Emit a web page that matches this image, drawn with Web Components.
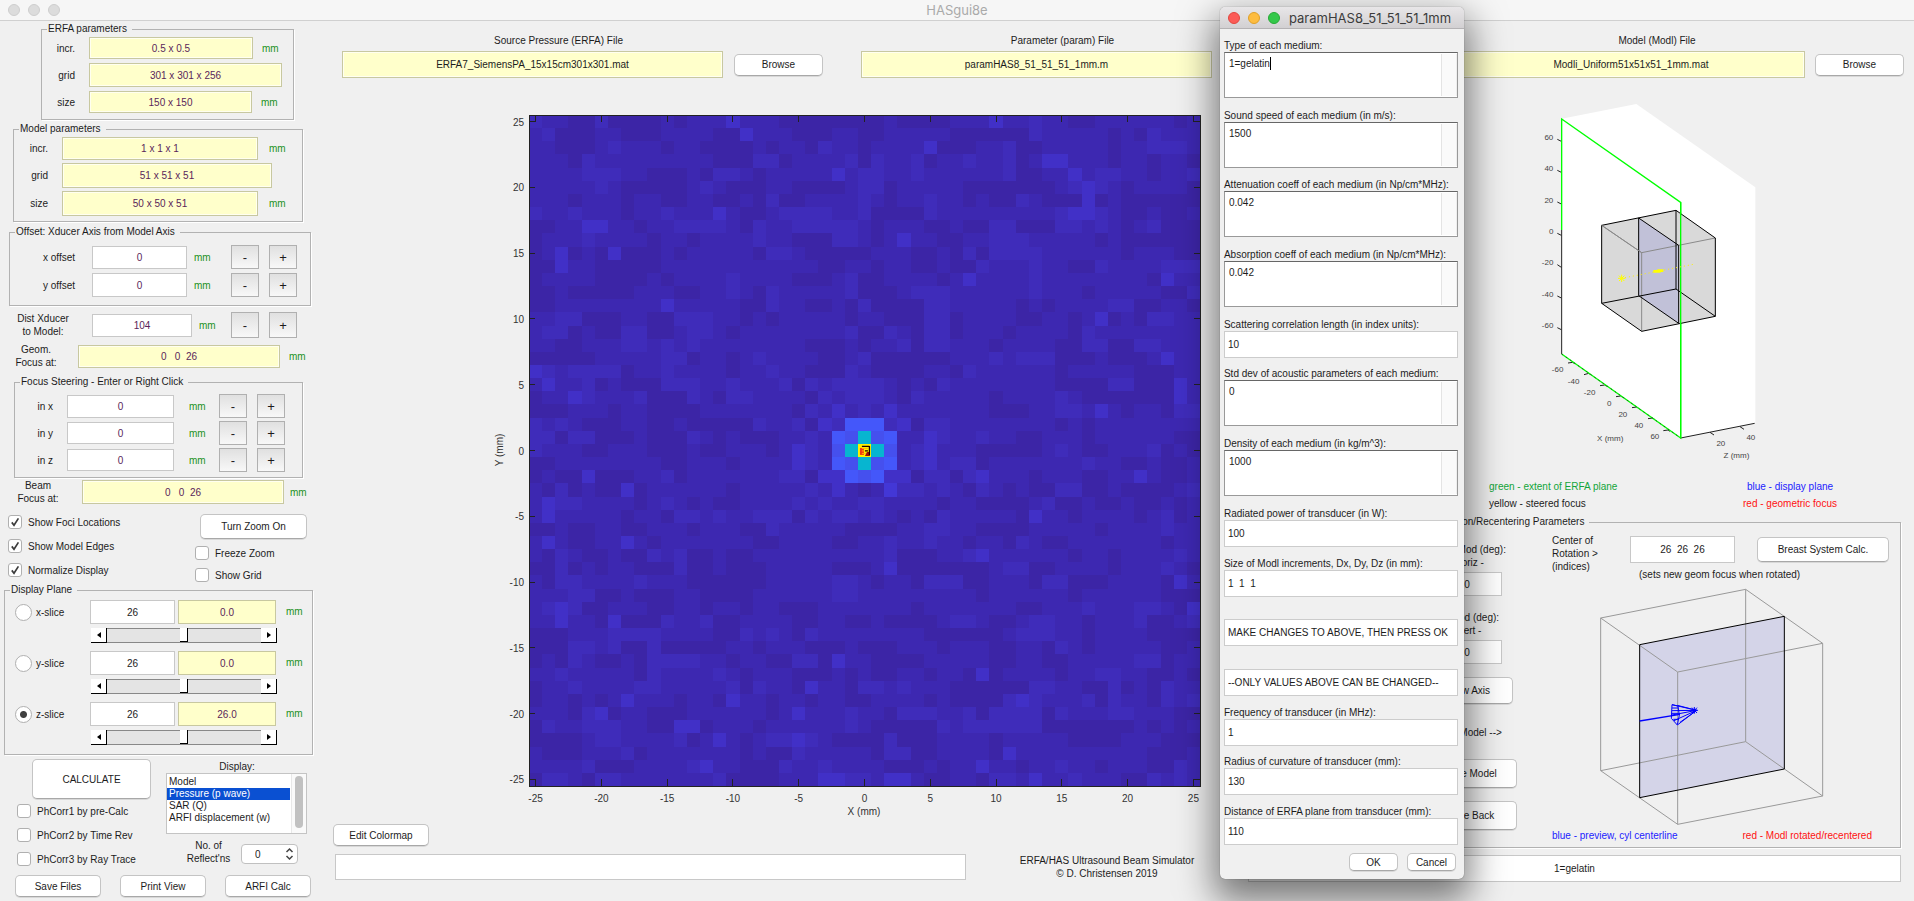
<!DOCTYPE html>
<html lang="en">
<head>
<meta charset="utf-8">
<title>HASgui8e</title>
<style>
html,body{margin:0;min-height:100%;background:#f0f0f0}
body{font:10px/13px "Liberation Sans",Arial,sans-serif;color:#1c1c1c}
</style>
</head>
<body>
<has-app></has-app>
<script>
const BASE = `<style>
*{box-sizing:border-box}
input,button,select,textarea{font:inherit;color:inherit;margin:0;outline:none;border-radius:0}
label{display:block}
</style>`;

function define(name, render, after) {
  customElements.define(name, class extends HTMLElement {
    connectedCallback() {
      if (this.shadowRoot) return;
      const root = this.attachShadow({ mode: 'open' });
      root.innerHTML = BASE + render(k => this.getAttribute(k) || '', this);
      if (after) after(root, this);
    }
  });
}

/* Rounded push button */
define('mac-button', () => `<style>
:host{display:block;height:22px}
button{width:100%;height:100%;padding:0;background:#fff;border:1px solid #c4c4c4;border-bottom-color:#a8a8a8;border-radius:5px;white-space:nowrap;box-shadow:0 1px 0 #d8d8d8}
</style><button type="button"><slot></slot></button>`);

/* Etched frame with a caption */
define('etched-group', a => `<style>
:host{display:block}
fieldset{margin:0;padding:0;min-width:0;height:100%;border:1px solid #b2b2b2;box-shadow:1px 1px 0 #fff}
legend{margin-left:5px;padding:0 5px 0 1px;height:12px;line-height:12px;background:#f0f0f0}
</style><fieldset><legend>${a('caption')}</legend><slot></slot></fieldset>`);

/* Label, value box, unit and optional - / + buttons */
define('value-row', a => `<style>
:host{display:flex;align-items:center;--w:95px;--h:23px}
label{width:var(--lead);padding-right:var(--label-gap,14px);text-align:right;flex:none;white-space:nowrap}
label.two{text-align:center;padding:0 6px 0 0}
input{width:var(--w);height:var(--h);text-align:center;border:1px solid #c8c8c8;background:#fff;color:#5a1f5a;flex:none;padding:0}
input.y{background:#ffffcb;border-color:#c8c8a0;box-shadow:inset 0 0 0 1px #fffff0}
span{color:#229022;margin-left:var(--unit-gap,9px);width:18px;flex:none}
button{width:28px;height:var(--bh,24px);padding:0;font-size:13px;background:linear-gradient(#e0e0e0,#f8f8f8);border:1px solid #b0b0b0;margin-left:10px;flex:none}
span+button{margin-left:var(--step-gap,19px)}
</style><label for="v" class="${a('label').includes('<') ? 'two' : ''}">${a('label')}</label>
<input id="v" class="${a('tone')}" style="--w:${a('w')}px;--h:${a('h')}px" value="${a('value')}">
${a('unit') ? `<span>${a('unit')}</span>` : ''}
${a('steps') ? '<button type="button">-</button><button type="button">+</button>' : ''}`);

define('check-item', (a, el) => `<style>
:host{display:flex;align-items:center;height:var(--row,24px)}
label{display:flex;align-items:center;gap:6px;white-space:nowrap}
span{position:relative;width:14px;height:14px;flex:none}
input{appearance:none;width:14px;height:14px;border:1px solid #b0b0b0;border-radius:3px;background:#fff;display:block}
svg{position:absolute;inset:0;display:none;pointer-events:none}
input:checked+svg{display:block}
</style><label><span><input type="checkbox" ${el.hasAttribute('checked') ? 'checked' : ''}><svg width="14" height="14" viewBox="0 0 14 14"><path d="M3.8 7.4 6 10.2 10.4 3.4" fill="none" stroke="#3c3c3c" stroke-width="1.7"/></svg></span><slot></slot></label>`);

/* One display-plane slice: radio, index, position and scroller */
define('slice-row', (a, el) => `<style>
:host{display:grid;grid-template-columns:85px 85px 99px 1fr;column-gap:0;row-gap:3px;height:43px}
label{display:flex;align-items:center;gap:4px;padding-left:10px;height:24px}
input[type=radio]{appearance:none;width:17px;height:17px;border:1px solid #b0b0b0;border-radius:50%;background:#fff;flex:none}
input[type=radio]:checked{background:radial-gradient(circle,#404040 0 3px,#fff 4px)}
input[type=text]{width:100%;height:24px;text-align:center;border:1px solid #c8c8c8;background:#fff;padding:0}
input.y{background:#ffffcb;border-color:#c8c8a0;color:#5a1f5a;width:98px;margin-left:3px}
.unit{color:#229022;padding-left:12px;line-height:24px}
.bar{grid-column:2/4;display:flex;height:15px;width:186px;margin-left:1px}
.bar button{width:16px;padding:0;background:#fff;border:0;border-right:1px solid #000;border-bottom:1px solid #000;display:grid;place-items:center}
input[type=range]{appearance:none;flex:1;min-width:0;height:15px;background:#e4e4e4;border-top:1px solid #888;border-bottom:1px solid #888}
input[type=range]::-webkit-slider-thumb{appearance:none;width:8px;height:14px;background:#fff;border-right:1px solid #000;border-bottom:1px solid #000}
</style><label><input type="radio" ${el.hasAttribute('checked') ? 'checked' : ''}>${a('name')}</label>
<input type="text" aria-label="${a('name')} index" value="26"><input type="text" class="y" aria-label="${a('name')} position" value="${a('pos')}"><span class="unit">mm</span>
<div class="bar"><button type="button" aria-label="Previous"><svg width="4" height="6"><path d="M4 0V6L0 3z"/></svg></button><input type="range" aria-label="${a('name')} scroller" value="50"><button type="button" aria-label="Next"><svg width="4" height="6"><path d="M0 0V6L4 3z"/></svg></button></div>`);

define('file-picker', a => `<style>
:host{display:block}
label{text-align:center;padding-left:52px;line-height:13px;margin-bottom:4px}
.row{display:grid;grid-template-columns:1fr;gap:var(--gap,11px);align-items:center}
.row.b{grid-template-columns:1fr 89px}
.lab{display:grid;grid-template-columns:1fr;gap:var(--gap,11px)}
.lab.b{grid-template-columns:1fr 89px}
input{width:100%;height:27px;min-width:0;text-align:center;background:#ffffcb;border:1px solid #c8c8a0;box-shadow:inset 0 0 0 1px #fffff0;padding:0}
</style><div class="lab ${a('browse')}"><label for="f">${a('caption')}</label></div>
<div class="row ${a('browse')}"><input id="f" value="${a('file')}">${a('browse') ? '<mac-button>Browse</mac-button>' : ''}</div>`);

/* Pressure map: 51 x 51 cells; HOT lists the brighter ones as "column row" */
const HOT = `15 0;35 0;16 1;30 2;39 3;40 3;23 4;41 4;42 5;42 6;14 7;41 7;42 7;4 8;5 8;28 9;2 10;6 10;2 11;33 12;48 12;10 14;43 15;48 18;0 19;1 20;49 20;3 21;49 21;43 22;4 27;34 27;46 27;7 28;1 29;1 30;38 30;1 32;7 32;34 33;27 34;49 35;2 37;50 37;2 38;6 38;34 42;23 41;21 43;7 44;15 44;37 44;5 45;20 45;11 46;12 46;14 47;20 47;36 48;13 49;34 49;22 50;23 50;27 50;28 50;38 50`;
const CORE = ['2021222210102','1102122210211','1021312131111','1203266623022','1121657561132','1321578751231','1321657561231','2203365633022','1121310142212','1212112211110','2021221210102'];
const SHADES = ['#3c25a6','#3d28b1','#3f2cba','#4130c7','#4337d6','#4550ee','#4457fa','#07b5d0','#fff200'];
function heatCells() {
  let s = 20190;
  const rnd = () => (s = (s * 1103515245 + 12345) % 2147483648) / 2147483648;
  const g = [];
  for (let y = 0; y < 51; y++) {
    g.push([]);
    for (let x = 0; x < 51; x++) {
      const v = rnd(), k = rnd();
      if (k < .25 && x) g[y].push(g[y][x - 1]);
      else if (k < .42 && y) g[y].push(g[y - 1][x]);
      else g[y].push(v < .3 ? 0 : v < .84 ? 1 : 2);
    }
  }
  HOT.split(';').forEach(p => { const [x, y] = p.split(' ').map(Number); g[y][x] = 3; });
  CORE.forEach((r, j) => [...r].forEach((c, i) => g[20 + j][19 + i] = +c));
  g[25][25] = 8;
  const d = SHADES.map(() => '');
  g.forEach((row, y) => { for (let x = 0; x < 51;) { let n = x; while (n < 51 && row[n] === row[x]) n++; d[row[x]] += `M${x} ${y}h${n - x}v1h${x - n}z`; x = n; } });
  return d.map((p, i) => `<path fill="${SHADES[i]}" d="${p}"/>`).join('');
}
define('pressure-plot', () => {
  const c = 671 / 51, X0 = 40, Y0 = 10;
  let ticks = '', text = '';
  for (let i = 0; i <= 10; i++) {
    const p = c * (i * 5 + .5);
    ticks += `M${X0 + p} ${Y0}v7M${X0 + p} ${Y0 + 671}v-7M${X0} ${Y0 + p}h6M${X0 + 671} ${Y0 + p}h-6`;
    text += `<text x="${X0 + p}" y="${Y0 + 687}" text-anchor="middle">${i * 5 - 25}</text><text x="${X0 - 5}" y="${Y0 + p + 4}" text-anchor="end">${25 - i * 5}</text>`;
  }
  return `<style>:host{display:block}svg{display:block;width:100%}text{font-size:10px;fill:#333}</style>
<svg viewBox="0 0 716 715"><g transform="translate(${X0} ${Y0}) scale(${c})" shape-rendering="crispEdges">${heatCells()}</g>
<g transform="translate(${X0 + c * 25} ${Y0 + c * 25})"><path d="M2 4h4v7h-4z" fill="#f33a10"/><path d="M9 8h3v4h-5z" fill="#a01008"/><path d="M4 2.5H11.5M11.5 2v9M7 7h3" fill="none" stroke="#1a0500" stroke-width="1.3"/><path d="M4 4.5h6M4 7h2M4 9.5h4" stroke="#ffb800" stroke-width="1"/></g>
<path d="M${X0} ${Y0}h671v671h-671z${ticks}" fill="none" stroke="#222" stroke-width="1" shape-rendering="crispEdges"/>${text}
<text x="${X0 + 335}" y="710" text-anchor="middle">X (mm)</text><text transform="translate(14 345) rotate(-90)" text-anchor="middle">Y (mm)</text></svg>`;
});

/* 3-D overview of the ERFA plane and the model block */
define('model-view', () => {
  const t = [[160,420,60],[160,513,40],[160,609,20],[160,702,0],[160,795,-20],[160,891,-40],[160,984,-60],
    [190,1116,-60],[238,1152,-40],[286,1185,-20],[334,1218,0],[382,1251,20],[430,1284,40],[478,1317,60],[676,1338,20],[766,1320,40]];
  return `<style>:host{display:block}svg{display:block;width:100%}text{font-size:24px;fill:#444;text-anchor:end}</style>
<svg viewBox="90 300 720 1110"><path d="M185 356 409 312 766 562V1270L542 1314 185 1062z" fill="#fff"/>
<path d="M185 690V1062M542 1314 764 1270M172 418l12 6M172 511l12 6M172 606l12 6M172 700l12 6M172 794l12 8M172 888l12 6M172 983l12 6M204 1089l14-2 6 4M252 1124l14-4 6 4M300 1157l14-2 6 4M348 1190l14-2 6 4M396 1223l14-2 6 4M444 1256l14-2 6 4M490 1292l14-2 6 4M630 1297l12 8M720 1280l12 8" fill="none" stroke="#222" stroke-width="3"/>
<path d="M185 690V357L542 607V1314L185 1062" fill="none" stroke="#0f0" stroke-width="4"/>
<path d="M185 1062 542 1314" stroke="#222" stroke-width="2" stroke-dasharray="5 10"/>
<path d="M305 676 528 631 646 714V949L425 994 305 910z" fill="#d9d9d9"/>
<path d="M416 654 536 736V970L416 887z" fill="#c1c1d8"/>
<path d="M305 676 425 758 646 714M425 758V994" fill="none" stroke="#8a8a8a" stroke-width="3"/>
<path d="M305 676 528 631 646 714V949L425 994 305 910zM305 910 528 867 646 949M528 631V867M416 654 536 736V970L416 887z" fill="none" stroke="#000" stroke-width="3"/>
<path d="M305 676 425 758" stroke="#8a8a8a" stroke-width="3"/>
<path d="M542 607V1314" stroke="#0f0" stroke-width="4"/>
<path d="M375 833 580 793" stroke="#fff200" stroke-width="3" stroke-dasharray="3 9"/>
<path d="M354 835h22M365 824v22M357 827l16 16M373 827l-16 16" stroke="#ff0" stroke-width="3"/><path d="M460 814h22M472 812h18" stroke="#ff0" stroke-width="8"/>
${t.map(([x, y, s]) => `<text x="${x}" y="${y}">${s}</text>`).join('')}
<text x="370" y="1323">X (mm)</text><text x="748" y="1374">Z (mm)</text></svg>`;
});

/* Wireframe preview used by the rotation panel */
define('rotation-view', () => `<style>:host{display:block}svg{display:block;width:100%}</style>
<svg viewBox="405 348 699 729"><path d="M539 524 973 439V897L539 983z" fill="#d4d4e8"/>
<path d="M422 444 857 358 1088 520 653 606zM422 902 857 815 1088 978 653 1063zM422 444V902M857 358V815M1088 520V978M653 606V1063" fill="none" stroke="#999" stroke-width="3"/>
<path d="M539 524 973 439V897L539 983z" fill="none" stroke="#000" stroke-width="3"/>
<path d="M539 753 660 733" stroke="#00f" stroke-width="4"/>
<path d="M710 721 636 704 634 745 652 765zM710 721 652 706M710 721 636 722M710 721 636 735M710 721 642 752M710 721 660 757M636 704l18 4 4 28-6 28M636 714h18M636 730h20M640 748h16M692 721h22M703 711v20M696 713l15 16M711 713l-15 16" fill="none" stroke="#00f" stroke-width="3"/></svg>`);

define('dialog-field', a => `<style>
:host{display:block}
label{height:12px;line-height:12px;white-space:nowrap}
textarea,input{display:block;width:100%;background:#fff}
textarea{height:46px;resize:none;overflow:hidden;border:1px solid #999;border-top-color:#666;padding:4px 20px 0 4px;margin-bottom:1px}
input{height:27px;border:1px solid #ccc;padding:0 3px}
.area{position:relative}
.area i{position:absolute;right:1px;top:2px;bottom:2px;width:16px;background:#fafafa;border-left:1px solid #e4e4e4;border-right:1px solid #eee}
.area b{position:absolute;left:46px;top:5px;width:1px;height:13px;background:#000}
</style>${a('label') ? `<label for="v">${a('label')}</label>` : ''}${a('kind') === 'area'
  ? `<div class="area"><textarea id="v">${a('value')}</textarea><i></i>${a('caret') ? '<b></b>' : ''}</div>`
  : `<input id="v" value="${a('value')}" ${a('label') ? '' : 'aria-label="Note"'}>`}`);

const FIELDS = [
  ['Type of each medium:', '1=gelatin', 1], ['Sound speed of each medium (in m/s):', '1500', 1],
  ['Attenuation coeff of each medium (in Np/cm*MHz):', '0.042', 1], ['Absorption coeff of each medium (in Np/cm*MHz):', '0.042', 1],
  ['Scattering correlation length (in index units):', '10'], ['Std dev of acoustic parameters of each medium:', '0', 1],
  ['Density of each medium (in kg/m^3):', '1000', 1], ['Radiated power of transducer (in W):', '100'],
  ['Size of Modl increments, Dx, Dy, Dz (in mm):', '1  1  1'], ['', 'MAKE CHANGES TO ABOVE, THEN PRESS OK'],
  ['', '--ONLY VALUES ABOVE CAN BE CHANGED--'], ['Frequency of transducer (in MHz):', '1'],
  ['Radius of curvature of transducer (mm):', '130'], ['Distance of ERFA plane from transducer (mm):', '110']];
define('param-dialog', () => `<style>
:host{display:flex;flex-direction:column;background:#f0f0f0;border-radius:5px;box-shadow:0 0 1px rgba(0,0,0,.6),0 16px 36px 6px rgba(0,0,0,.5)}
header{display:flex;align-items:center;gap:8px;height:22px;padding-left:8px;background:linear-gradient(#e8e6e8,#d2d0d2);border-bottom:1px solid #b4b2b4;border-radius:5px 5px 0 0;font:13px/20px Inter,sans-serif;color:#3c3c3c;white-space:nowrap}
i{width:12px;height:12px;border-radius:50%;background:#fc5b57;border:1px solid #e2463f}
i+i{background:#fdbc40;border-color:#e0a028}i+i+i{background:#34c84a;border-color:#27aa35;margin-right:1px}
.fields{flex:1;display:flex;flex-direction:column;justify-content:space-between;padding:11px 6px 0 4px}
.fields .note{padding-top:12px}
footer{display:flex;justify-content:flex-end;gap:9px;padding:8px 8px 8px 0}
mac-button{width:49px;height:18px}
</style><header><i></i><i></i><i></i>paramHAS8_51_51_51_1mm</header>
<div class="fields">${FIELDS.map(([l, v, k], n) => `<dialog-field class="${l ? '' : 'note'}" label="${l}" value="${v}" kind="${k ? 'area' : ''}" caret="${n ? '' : 'y'}"></dialog-field>`).join('')}</div>
<footer><mac-button>OK</mac-button><mac-button>Cancel</mac-button></footer>`);

/* Left column of controls */
define('control-panel', () => `<style>
:host{display:block}
.rows{display:grid;gap:var(--g)}
.pair{display:grid;grid-template-columns:187px 107px;padding-left:8px;margin-top:5px;height:74px}
.right{padding-top:4px}
.right check-item{--row:22px}
.right mac-button{width:107px;height:25px;margin:0 0 3px 5px}
.lower{display:grid;grid-template-columns:149px 142px;padding-left:17px}
.calc{width:119px;height:40px;margin:4px 0 0 15px}
.list{position:relative;width:141px;height:61px}
.list select{appearance:none;width:100%;height:100%;border:1px solid #c4c4c4;background:#fff;padding:2px 0 0;overflow:hidden}
.list option{height:12px;min-height:12px;line-height:12px;padding:0 2px;margin-right:16px;color:#1c1c1c}
.list option:checked{background:#0a50d2 linear-gradient(#0a50d2,#0a50d2);color:#fff}
.list i{position:absolute;right:1px;top:1px;bottom:1px;width:15px;background:#fafafa;border-left:1px solid #e8e8e8}
.list i::after{content:"";position:absolute;left:3px;top:2px;width:8px;height:52px;border-radius:4px;background:#c1c1c1}
.disp{text-align:center;line-height:12px;margin-top:6px}
.refl{display:flex;align-items:center;gap:10px;margin:5px 0 0 20px}
.refl label{text-align:center;width:45px}
.pop{position:relative;margin-top:4px}
.pop select{appearance:none;width:57px;height:20px;border:1px solid #c0c0c0;border-radius:4px;background:#fff;padding:0 0 0 13px}
.pop svg{position:absolute;right:4px;top:3px;pointer-events:none}
.btns{display:grid;grid-template-columns:repeat(3,86px);gap:19px;margin:4px 0 0 15px}
</style>
<etched-group caption="ERFA parameters" style="width:253px;margin:2px 0 0 41px"><div class="rows" style="--g:4px;--lead:47px;padding:2px 0 6px">
<value-row label="incr." value="0.5 x 0.5" unit="mm" tone="y" w="164" h="22"></value-row>
<value-row label="grid" value="301 x 301 x 256" tone="y" w="193" h="24"></value-row>
<value-row label="size" value="150 x 150" unit="mm" tone="y" w="163" h="22"></value-row></div></etched-group>
<etched-group caption="Model parameters" style="width:290px;margin:3px 0 0 13px"><div class="rows" style="--g:3px;--lead:48px;--unit-gap:11px;padding:2px 0 5px">
<value-row label="incr." value="1 x 1 x 1" unit="mm" tone="y" w="196" h="23"></value-row>
<value-row label="grid" value="51 x 51 x 51" tone="y" w="210" h="25"></value-row>
<value-row label="size" value="50 x 50 x 51" unit="mm" tone="y" w="196" h="25"></value-row></div></etched-group>
<etched-group caption="Offset: Xducer Axis from Model Axis" style="width:302px;margin:4px 0 0 9px"><div class="rows" style="--g:4px;--lead:82px;--label-gap:17px;--unit-gap:7px;padding:7px 0 8px">
<value-row label="x offset" value="0" unit="mm" steps="y" w="95" h="23"></value-row>
<value-row label="y offset" value="0" unit="mm" steps="y" w="95" h="24"></value-row></div></etched-group>
<value-row label="Dist Xducer<br>to Model:" value="104" unit="mm" steps="y" w="100" h="23" style="--lead:92px;--unit-gap:7px;--step-gap:14px;--bh:26px;margin-top:6px"></value-row>
<value-row label="Geom.<br>Focus at:" value="0   0  26" unit="mm" tone="y" w="202" h="23" style="--lead:78px;margin-top:5px"></value-row>
<etched-group caption="Focus Steering - Enter or Right Click" style="width:289px;margin:7px 0 0 14px"><div class="rows" style="--g:3px;--lead:52px;--unit-gap:15px;--step-gap:12px;padding:6px 0 5px">
<value-row label="in x" value="0" unit="mm" steps="y" w="107" h="23"></value-row>
<value-row label="in y" value="0" unit="mm" steps="y" w="107" h="22"></value-row>
<value-row label="in z" value="0" unit="mm" steps="y" w="107" h="22"></value-row></div></etched-group>
<value-row label="Beam<br>Focus at:" value="0   0  26" unit="mm" tone="y" w="202" h="24" style="--lead:82px;--unit-gap:6px;margin-top:1px"></value-row>
<div class="pair"><div><check-item checked>Show Foci Locations</check-item><check-item checked>Show Model Edges</check-item><check-item checked>Normalize Display</check-item></div>
<div class="right"><mac-button>Turn Zoom On</mac-button><check-item>Freeze Zoom</check-item><check-item>Show Grid</check-item></div></div>
<etched-group caption="Display Plane" style="width:309px;margin:0 0 0 4px"><div class="rows" style="--g:8px;padding:4px 0 9px">
<slice-row name="x-slice" pos="0.0"></slice-row><slice-row name="y-slice" pos="0.0"></slice-row><slice-row name="z-slice" pos="26.0" checked></slice-row></div></etched-group>
<div class="lower"><div><mac-button class="calc">CALCULATE</mac-button><check-item>PhCorr1 by pre-Calc</check-item><check-item>PhCorr2 by Time Rev</check-item><check-item>PhCorr3 by Ray Trace</check-item></div>
<div><label class="disp" for="list">Display:</label><div class="list"><select id="list" size="4"><option>Model</option><option selected>Pressure (p wave)</option><option>SAR (Q)</option><option>ARFI displacement (w)</option></select><i></i></div>
<div class="refl"><label for="n">No. of Reflect'ns</label><div class="pop"><select id="n"><option>0</option></select><svg width="9" height="14" viewBox="0 0 9 14"><path d="M1.5 5 4.5 2 7.5 5M1.5 9 4.5 12 7.5 9" fill="none" stroke="#444" stroke-width="1.5"/></svg></div></div></div></div>
<div class="btns"><mac-button>Save Files</mac-button><mac-button>Print View</mac-button><mac-button>ARFI Calc</mac-button></div>`);

define('center-panel', () => `<style>
:host{display:block}
.files{display:grid;grid-template-columns:481fr 351fr;gap:38px;padding:13px 36px 0 22px}
pressure-plot{margin:27px 43px 0 169px}
.edit{width:96px;margin:4px 0 0 13px}
.foot{display:grid;grid-template-columns:631fr 282fr;padding:8px 0 0 15px}
input{height:26px;border:1px solid #c8c8c8;background:#fff;width:100%}
p{margin:0;text-align:center}
</style><div class="files"><file-picker caption="Source Pressure (ERFA) File" file="ERFA7_SiemensPA_15x15cm301x301.mat" browse="b"></file-picker><file-picker caption="Parameter (param) File" file="paramHAS8_51_51_51_1mm.m"></file-picker></div>
<pressure-plot></pressure-plot><mac-button class="edit">Edit Colormap</mac-button>
<div class="foot"><input aria-label="Status"><p>ERFA/HAS Ultrasound Beam Simulator<br>© D. Christensen 2019</p></div>`);

define('model-panel', () => `<style>
:host{display:block;padding-right:10px}
file-picker{--gap:10px;padding:13px 0 0 209px}
model-view{width:240px;margin:22px 0 0 282px}
.key{display:grid;grid-template-columns:224px 170px;margin:8px 0 0 241px;line-height:17px}
.key span:nth-child(even){text-align:center;padding-right:36px;padding-left:20px;white-space:nowrap}
.g{color:#12a53a}.b{color:#22f}.r{color:#f11}
etched-group{margin:4px 3px 0 151px;height:332px}
.body{display:grid;grid-template-columns:120px 1fr;gap:32px;padding-top:6px}
.a{display:flex;flex-direction:column;align-items:center;padding-left:14px}
.a p{margin:15px 0 3px;text-align:center;white-space:nowrap}
.a p:first-child{margin-top:9px}
input{border:1px solid #c8c8c8;background:#fff;text-align:center;padding:0;height:24px;width:70px}
.a mac-button{width:99px;height:29px;margin-bottom:13px}
.a .axis{width:91px;height:27px;margin:13px 0 22px}
.a .move{margin:0 0 20px}
.top{display:grid;grid-template-columns:78px 105px 132px;align-items:start}
.top input{width:105px;height:27px;margin-top:2px}
.top mac-button{width:132px;height:25px;margin:3px 0 0 22px}
.note{margin:-5px 0 5px;padding-left:87px}
rotation-view{width:233px;margin-left:43px}
.sub{display:flex;justify-content:space-between;padding-right:28px}
.status{width:calc(100% - 3px);height:27px;margin-top:7px}
</style><file-picker caption="Model (Modl) File" file="Modli_Uniform51x51x51_1mm.mat" browse="b"></file-picker>
<model-view></model-view>
<div class="key"><span class="g">green - extent of ERFA plane</span><span class="b">blue - display plane</span><span>yellow - steered focus</span><span class="r">red - geometric focus</span></div>
<etched-group caption="Model Rotation/Recentering Parameters"><div class="body">
<div class="a"><p>Rot of Mod (deg):<br>- horiz -</p><input aria-label="Horizontal rotation" value="0"><p>Tilt Mod (deg):<br>- vert -</p><input aria-label="Vertical rotation" value="0">
<mac-button class="axis">Show Axis</mac-button><p class="move">Move Model --&gt;</p><mac-button>Rotate Model</mac-button><mac-button>Rotate Back</mac-button></div>
<div><div class="top"><label for="c">Center of<br>Rotation &gt;<br>(indices)</label><input id="c" value="26  26  26"><mac-button>Breast System Calc.</mac-button></div>
<div class="note">(sets new geom focus when rotated)</div><rotation-view></rotation-view>
<div class="sub"><span class="b">blue - preview, cyl centerline</span><span class="r">red - Modl rotated/recentered</span></div></div></div></etched-group>
<input class="status" aria-label="Media" value="1=gelatin">`);

define('has-app', () => `<style>
:host{display:block;position:relative;min-height:100vh;overflow:hidden;background:#f0f0f0}
header{display:grid;grid-template-columns:1fr auto 1fr;align-items:center;height:21px;background:#f6f6f6;border-bottom:1px solid #d0d0d0;font:13px/20px Inter,sans-serif;color:#aaa}
.dots{display:flex;gap:8px;padding-left:8px}
.dots i{width:12px;height:12px;border-radius:50%;background:#dcdcdc;border:1px solid #cecece}
main{display:grid;grid-template-columns:320px minmax(0,928fr) minmax(0,666fr)}
param-dialog{position:absolute;left:calc(64% - 5px);top:7px;width:244px;height:872px}
</style><header><div class="dots"><i></i><i></i><i></i></div><span>HASgui8e</span></header>
<main><control-panel></control-panel><center-panel></center-panel><model-panel></model-panel></main><param-dialog></param-dialog>`);
</script>
</body>
</html>
